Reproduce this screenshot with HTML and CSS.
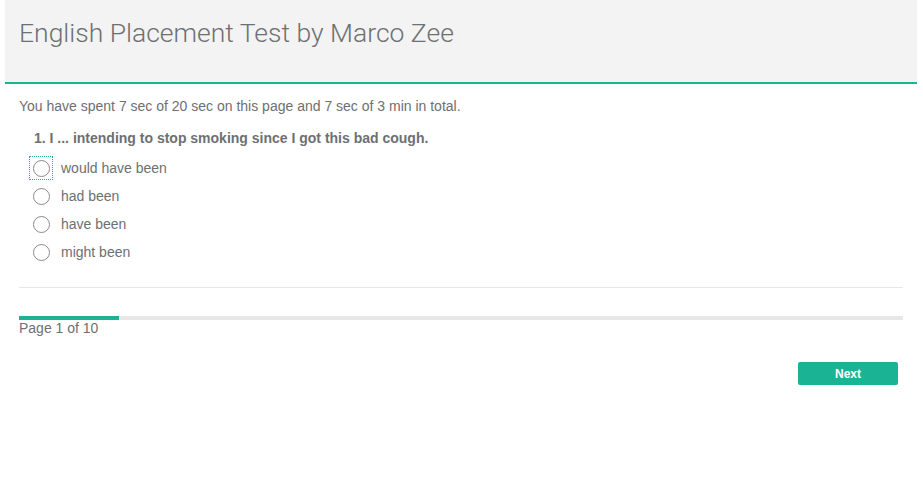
FILE: index.html
```html
<!DOCTYPE html>
<html>
<head>
<meta charset="utf-8">
<link rel="stylesheet" href="styles.css">
</head>
<body>
<div class="survey">
  <div class="header">
    <h3 class="title">English Placement Test by Marco Zee</h3>
  </div>
  <div class="body">
    <div class="timer">You have spent 7 sec of 20 sec on this page and 7 sec of 3 min in total.</div>
    <div class="question">
      <h5 class="q-title">1. I ... intending to stop smoking since I got this bad cough.</h5>
      <div class="items">
        <label class="item"><span class="radio-box focused"><span class="circle"></span></span><span class="label">would have been</span></label>
        <label class="item"><span class="radio-box"><span class="circle"></span></span><span class="label">had been</span></label>
        <label class="item"><span class="radio-box"><span class="circle"></span></span><span class="label">have been</span></label>
        <label class="item"><span class="radio-box"><span class="circle"></span></span><span class="label">might been</span></label>
      </div>
    </div>
    <div class="separator"></div>
    <div class="progress"><div class="progress-fill" style="width:100px"></div></div>
    <div class="page-text">Page 1 of 10</div>
    <div class="nav">
      <button class="next">Next</button>
    </div>
  </div>
</div>
</body>
</html>
```
FILE: styles.css
```css
html, body {
  margin: 0;
  padding: 0;
  background: #fff;
}
body {
  font-family: "Liberation Sans", Arial, sans-serif;
  color: #6d7072;
  font-size: 14px;
}
.survey {
  margin: 0 6px 0 5px;
}
.header {
  background: #f3f3f3;
  height: 82px;
  border-bottom: 2px solid #1ab394;
  box-sizing: content-box;
  padding: 0 14px;
}
.title {
  margin: 0;
  padding-top: 18px;
  font-family: Roboto, "Liberation Sans", sans-serif;
  font-weight: 300;
  font-size: 26.5px;
  line-height: 30px;
  color: #6d7072;
}
.body {
  padding: 0 14px;
}
.timer {
  margin-top: 14px;
  line-height: 16px;
}
.q-title {
  margin: 16px 0 0 15px;
  font-size: 14px;
  line-height: 16px;
  font-weight: bold;
}
.items {
  margin-top: 8px;
  display: flex;
  flex-direction: column;
}
.item {
  display: flex;
  align-items: center;
  height: 28px;
  padding-left: 10px;
}
.radio-box {
  width: 24px;
  height: 24px;
  box-sizing: border-box;
  display: flex;
  align-items: center;
  justify-content: center;
}
.radio-box.focused {
  border: 1px dotted #1ab394;
}
.circle {
  width: 17px;
  height: 17px;
  box-sizing: border-box;
  border: 1px solid #8a8a8a;
  border-radius: 50%;
  background: #fff;
}
.label {
  margin-left: 8px;
  line-height: 16px;
}
.separator {
  margin-top: 21px;
  height: 1px;
  background: #e7e7e7;
}
.progress {
  margin-top: 28px;
  height: 4px;
  background: #e7e7e7;
}
.progress-fill {
  height: 4px;
  background: #1ab394;
}
.page-text {
  line-height: 16px;
}
.nav {
  margin-top: 26px;
  display: flex;
  justify-content: flex-end;
  padding-right: 5px;
}
.next {
  width: 100px;
  height: 23px;
  border: none;
  border-radius: 2px;
  background: #1ab394;
  color: #fff;
  font-family: "Liberation Sans", Arial, sans-serif;
  font-weight: bold;
  font-size: 12px;
  padding: 0;
}
```
